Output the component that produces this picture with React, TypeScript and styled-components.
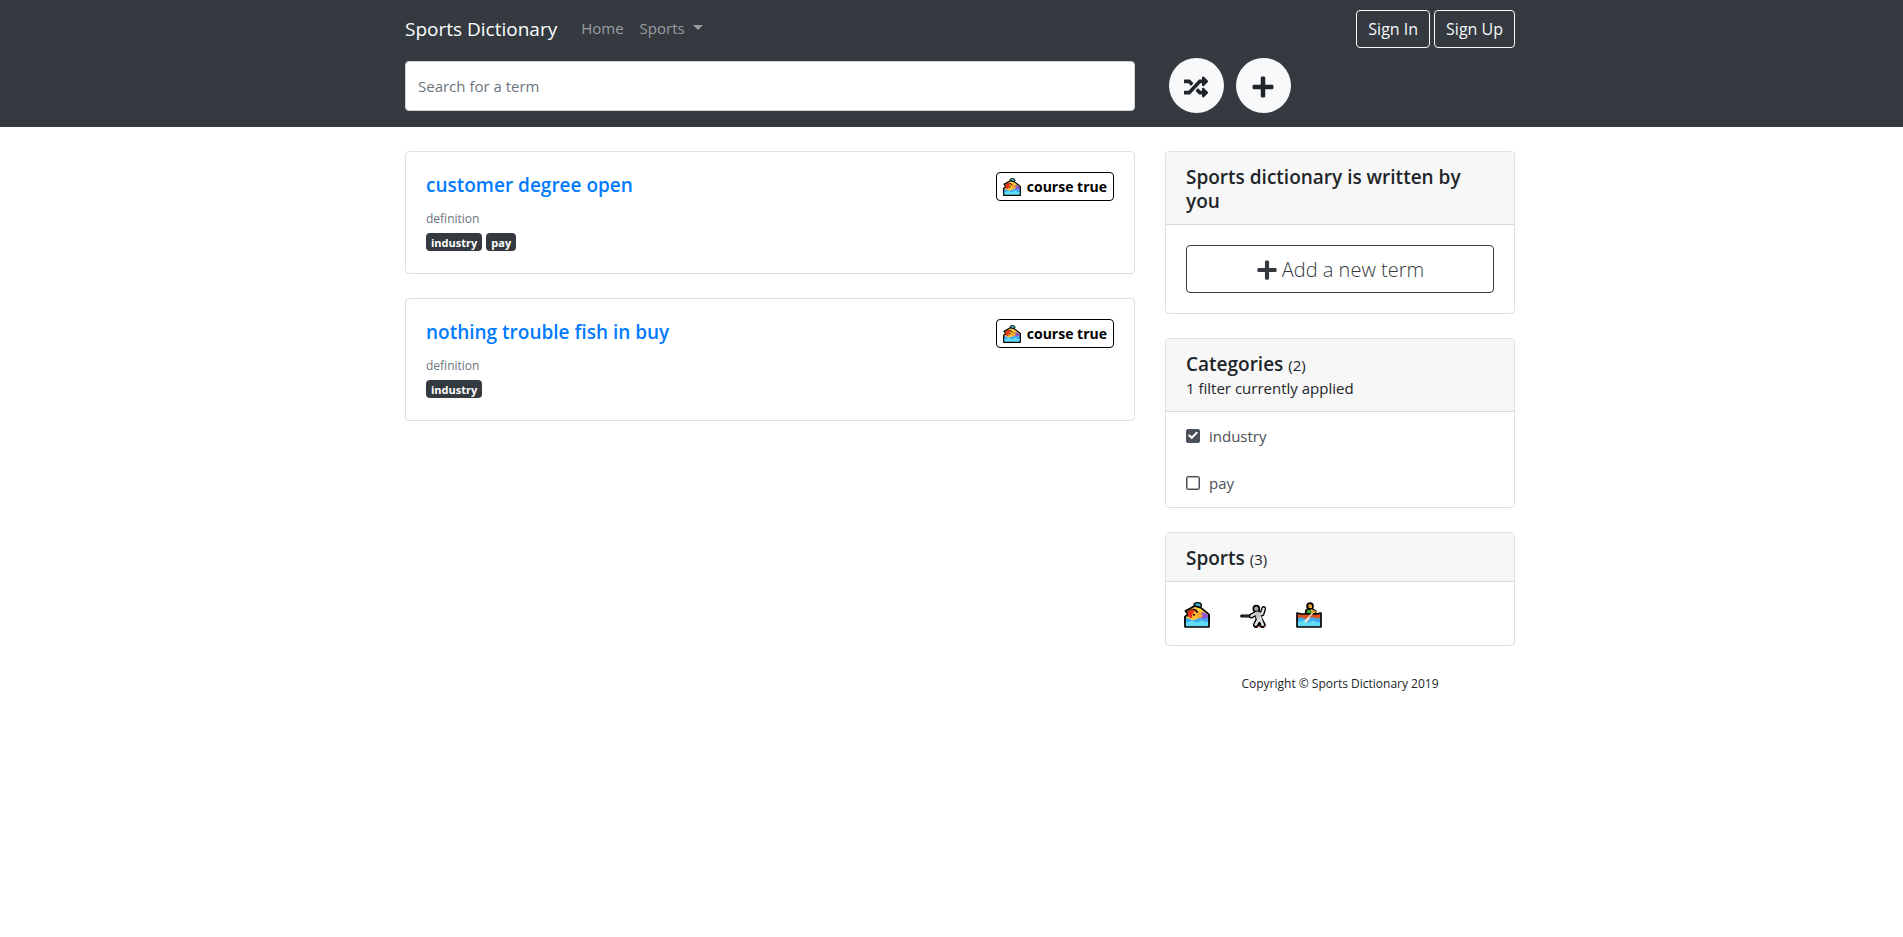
import React, { useState } from "react";
import styled, { createGlobalStyle, css } from "styled-components";
import { FaPlus, FaRandom } from "react-icons/fa";

const sans = `"Segoe UI", "Open Sans", "Noto Sans", sans-serif`;

const GlobalStyle = createGlobalStyle`
  *, *::before, *::after { box-sizing: border-box; }
  body {
    margin: 0;
    background: #fff;
    color: #212529;
    font-family: ${sans};
    font-size: 15px;
    line-height: 24px;
  }
  button, input { font-family: inherit; }
  h1, h2, p, ul { margin: 0; padding: 0; }
  a { text-decoration: none; }
`;

const Band = styled.div`
  padding-left: 17px;
`;

const HeaderBand = styled(Band).attrs({ as: "header" })`
  background: #343a40;
  padding-top: 10px;
  padding-bottom: 14px;
`;

const Container = styled.div`
  max-width: 1140px;
  margin: 0 auto;
  padding: 0 15px;
`;

const Columns = styled.div`
  display: grid;
  grid-template-columns: repeat(12, minmax(0, 1fr));
  column-gap: 30px;
`;

const MainColumn = styled.div`
  grid-column: span 8;
`;

const SideColumn = styled.div`
  grid-column: span 4;
`;

const NavRow = styled.nav`
  display: flex;
  align-items: center;
  height: 38px;
  margin-bottom: 10px;
`;

const Brand = styled.a`
  color: #fff;
  font-size: 19px;
  line-height: 30px;
  margin-right: 16px;
`;

const NavLink = styled.a`
  color: rgba(255, 255, 255, 0.5);
  padding: 7px 8px 9px;
`;

const Caret = styled.span`
  display: inline-block;
  margin-left: 8px;
  vertical-align: 4px;
  border-top: 5px solid;
  border-left: 5px solid transparent;
  border-right: 5px solid transparent;
`;

const AuthLinks = styled.div`
  display: flex;
  gap: 4px;
  margin-left: auto;
`;

const OutlineButton = styled.button<{ $wide?: boolean }>`
  display: flex;
  align-items: center;
  justify-content: center;
  background: transparent;
  border-radius: 4px;
  ${({ $wide }) =>
    $wide
      ? css`
          width: 100%;
          height: 48px;
          gap: 4px;
          padding: 2px 6px 0;
          border: 1px solid #343a40;
          color: #343a40;
          font-size: 20px;
          font-weight: 300;
          line-height: 30px;
        `
      : css`
          height: 38px;
          padding: 0 11px;
          border: 1px solid #f8f9fa;
          color: #f8f9fa;
          font-size: 16px;
          line-height: 24px;
        `}
`;

const SearchRow = styled(Columns)`
  align-items: center;
`;

const SearchInput = styled.input`
  display: block;
  width: 100%;
  height: 50px;
  padding: 0 12px;
  border: 1px solid #ced4da;
  border-radius: 4px;
  background: #fff;
  color: #495057;
  font-size: 15px;
  &::placeholder {
    color: #6c757d;
    opacity: 1;
  }
`;

const RoundActions = styled.div`
  display: flex;
  gap: 12px;
  padding-left: 4px;
`;

const RoundButton = styled.button`
  display: flex;
  align-items: center;
  justify-content: center;
  width: 55px;
  height: 55px;
  padding: 2px 1px 0 0;
  border: 0;
  border-radius: 50%;
  background: #f8f9fa;
  color: #212529;
  font-size: 24px;
`;

const Page = styled(Columns)`
  padding-top: 24px;
`;

const Stack = styled.div`
  display: flex;
  flex-direction: column;
  gap: 24px;
`;

const Card = styled.section`
  border: 1px solid rgba(0, 0, 0, 0.125);
  border-radius: 4px;
  overflow: hidden;
`;

const TermCard = styled(Card).attrs({ as: "article" })`
  display: flex;
  align-items: flex-start;
  justify-content: space-between;
  min-height: 123px;
  padding: 20px;
`;

const TermTitle = styled.h2`
  font-size: 19px;
  font-weight: 600;
  line-height: 26px;
  margin-bottom: 11px;
  a {
    color: #007bff;
  }
`;

const Definition = styled.p`
  color: #6c757d;
  font-size: 12px;
  line-height: 20px;
  margin-bottom: 4px;
`;

const Tags = styled.div`
  display: flex;
  gap: 4px;
`;

const Tag = styled.span`
  height: 18px;
  padding: 0 5px;
  border-radius: 4px;
  background: #343a40;
  color: #fff;
  font-size: 11px;
  font-weight: 700;
  line-height: 19px;
`;

const SportBadge = styled.a`
  display: flex;
  align-items: center;
  gap: 6px;
  height: 29px;
  padding: 0 6px;
  border: 1px solid #000;
  border-radius: 4px;
  color: #000;
  font-size: 14px;
  font-weight: 700;
  line-height: 20px;
`;

const CardHeader = styled.header`
  padding: 13px 20px 11px;
  background: #f7f7f7;
  border-bottom: 1px solid rgba(0, 0, 0, 0.125);
`;

const CardTitle = styled.h2`
  font-size: 19px;
  font-weight: 600;
  line-height: 24px;
`;

const Count = styled.small`
  font-size: 15px;
  font-weight: 400;
  line-height: 1;
`;

const CardBody = styled.div`
  padding: 20px;
`;

const CategoryItem = styled.label`
  display: flex;
  align-items: center;
  gap: 9px;
  height: 47px;
  padding: 0 20px;
  color: #495057;
`;

const CategoryList = styled.div`
  padding-bottom: 1px;
`;

const CheckBox = styled.input`
  appearance: none;
  display: grid;
  place-content: center;
  width: 14px;
  height: 14px;
  margin: 0;
  border: 1px solid #495057;
  border-radius: 2px;
  box-shadow: inset 0 0 0 1px rgba(73, 80, 87, 0.5);
  &:checked {
    background: #495057;
  }
  &:checked::after {
    content: "";
    width: 10px;
    height: 8px;
    background: #fff;
    clip-path: polygon(0 52%, 14% 34%, 38% 60%, 86% 0, 100% 16%, 38% 96%);
  }
`;

const SportList = styled.ul`
  display: flex;
  gap: 30px;
  height: 63px;
  padding: 20px 18px;
  list-style: none;
  a {
    display: block;
  }
  svg {
    display: block;
  }
`;

const Footer = styled.footer`
  padding: 24px 0;
  font-size: 12px;
  line-height: 28px;
  text-align: center;
`;

type IconProps = { size: number };

function SwimmerIcon({ size }: IconProps) {
  return (
    <svg width={size} height={size} viewBox="0 0 78 78" aria-hidden="true">
      <ellipse cx="41" cy="10" rx="11" ry="8" fill="#3fb5c9" stroke="#000" strokeWidth="4" />
      <path d="M4 27 L32 12 L50 17 L75 37 V62 H3 V44 L12 36 Z" fill="#ffc83d" stroke="#000" strokeWidth="5" strokeLinejoin="round" />
      <path d="M44 36 L58 30 L73 39 V58 H42 Z" fill="#8b5ad2" />
      <path d="M36 26 L50 30 L56 42 L48 50 L40 46 Z" fill="#f6a42c" />
      <path d="M3 50 Q11 46 19 52 T37 52 T55 50 T75 46 V75 H3 Z" fill="#61dcf7" />
      <path d="M3 50 Q11 46 19 52 T37 52 T55 50 T75 46 V56 Q67 64 59 58 Q51 52 43 60 Q35 64 29 57 Q21 54 15 60 Q9 62 3 56 Z" fill="#3fa8f2" />
      <circle cx="26" cy="36" r="13" fill="#ffb52e" />
      <path d="M12 44 A14 14 0 0 1 24 23 Q36 20 40 32" fill="none" stroke="#000" strokeWidth="4" />
      <path d="M14 44 A12 12 0 0 1 34 27 Q23 32 24 48 Q18 49 14 44 Z" fill="#e9341c" />
      <circle cx="30" cy="38" r="3" fill="#000" />
      <path d="M3 44 V75 H75 V38" fill="none" stroke="#000" strokeWidth="5" strokeLinejoin="round" />
    </svg>
  );
}

function FencerIcon({ size }: IconProps) {
  return (
    <svg width={size} height={size} viewBox="0 0 78 78" aria-hidden="true">
      <g fill="none" stroke="#000" strokeLinecap="round" strokeLinejoin="round">
        <path d="M5 42 H34" strokeWidth="9" />
        <path d="M34 42 L48 34 L66 36 L71 20" strokeWidth="15" />
        <path d="M52 36 L56 52 L48 69 M58 50 L68 69" strokeWidth="18" />
        <circle cx="49" cy="20" r="9" strokeWidth="5" fill="#a9a9a9" />
      </g>
      <g fill="none" stroke="#e2e2e2" strokeLinecap="round" strokeLinejoin="round">
        <path d="M34 42 L48 34 L66 36 L71 20" strokeWidth="7" />
        <path d="M53 36 L58 52" strokeWidth="15" stroke="#c4c4c4" />
        <path d="M56 52 L47 68 M61 50 L68 68" strokeWidth="8" />
        <path d="M8 42 H26" strokeWidth="2" stroke="#777" />
      </g>
      <path d="M58 68 L60 62" stroke="#000" strokeWidth="5" />
      <path d="M52 74 H60 M71 74 H76" stroke="#c44a45" strokeWidth="4" />
    </svg>
  );
}

function RowerIcon({ size }: IconProps) {
  return (
    <svg width={size} height={size} viewBox="0 0 78 78" aria-hidden="true">
      <path d="M28 36 L31 23 L46 18 L60 28 L56 38 Z" fill="#43a82a" stroke="#000" strokeWidth="5" strokeLinejoin="round" />
      <circle cx="42" cy="12" r="9" fill="#a86a24" stroke="#000" strokeWidth="5" />
      <path d="M41 8 Q49 9 48 18 L39 18 Z" fill="#f5ad3c" />
      <path d="M45 24 L57 29 L48 35" fill="none" stroke="#f5ad3c" strokeWidth="5" />
      <path d="M3 33 L16 36 H62 L75 33 V46 L72 60 H6 L3 46 Z" fill="#d9531e" stroke="#000" strokeWidth="5" strokeLinejoin="round" />
      <path d="M3 52 Q12 44 20 48 Q30 54 40 48 Q50 44 58 49 Q66 52 75 48 V75 H3 Z" fill="#61dcf7" />
      <path d="M3 52 Q12 44 20 48 Q30 54 40 48 Q50 44 58 49 Q66 52 75 48 V58 Q67 64 59 58 Q50 52 43 59 Q35 64 28 58 Q20 53 13 58 Q8 60 3 58 Z" fill="#3fa8f2" />
      <path d="M3 49 V75 H75 V49" fill="none" stroke="#000" strokeWidth="5" strokeLinejoin="round" />
      <path d="M50 32 L34 52" stroke="#f7c9ac" strokeWidth="5" />
      <path d="M37 46 L26 57 L29 61 L40 51 Z" fill="#ffe3d6" stroke="#ffe3d6" strokeWidth="3" strokeLinejoin="round" />
    </svg>
  );
}

const terms = [
  { title: "customer degree open", tags: ["industry", "pay"] },
  { title: "nothing trouble fish in buy", tags: ["industry"] },
];

const sports = [
  { name: "course true", Icon: SwimmerIcon },
  { name: "fencing", Icon: FencerIcon },
  { name: "rowing", Icon: RowerIcon },
];

export default function App() {
  const [selected, setSelected] = useState<string[]>(["industry"]);
  const toggle = (name: string) =>
    setSelected((list) =>
      list.includes(name) ? list.filter((n) => n !== name) : [...list, name]
    );

  return (
    <>
      <GlobalStyle />
      <HeaderBand>
        <Container>
          <NavRow>
            <Brand href="#">Sports Dictionary</Brand>
            <NavLink href="#">Home</NavLink>
            <NavLink href="#">
              Sports
              <Caret />
            </NavLink>
            <AuthLinks>
              <OutlineButton type="button">Sign In</OutlineButton>
              <OutlineButton type="button">Sign Up</OutlineButton>
            </AuthLinks>
          </NavRow>
          <SearchRow>
            <MainColumn>
              <SearchInput type="search" aria-label="Search for a term" placeholder="Search for a term" />
            </MainColumn>
            <SideColumn>
              <RoundActions>
                <RoundButton type="button" aria-label="Random term">
                  <FaRandom />
                </RoundButton>
                <RoundButton type="button" aria-label="Add a term">
                  <FaPlus />
                </RoundButton>
              </RoundActions>
            </SideColumn>
          </SearchRow>
        </Container>
      </HeaderBand>

      <Band>
        <Container>
          <Page>
            <MainColumn>
              <Stack>
                {terms.map((term) => (
                  <TermCard key={term.title}>
                    <div>
                      <TermTitle>
                        <a href="#">{term.title}</a>
                      </TermTitle>
                      <Definition>definition</Definition>
                      <Tags>
                        {term.tags.map((tag) => (
                          <Tag key={tag}>{tag}</Tag>
                        ))}
                      </Tags>
                    </div>
                    <SportBadge href="#">
                      <SwimmerIcon size={18} />
                      course true
                    </SportBadge>
                  </TermCard>
                ))}
              </Stack>
            </MainColumn>

            <SideColumn>
              <Stack>
                <Card>
                  <CardHeader>
                    <CardTitle>Sports dictionary is written by you</CardTitle>
                  </CardHeader>
                  <CardBody>
                    <OutlineButton type="button" $wide>
                      <FaPlus size={22} />
                      Add a new term
                    </OutlineButton>
                  </CardBody>
                </Card>

                <Card>
                  <CardHeader>
                    <CardTitle>
                      Categories <Count>(2)</Count>
                    </CardTitle>
                    <p>{selected.length} filter currently applied</p>
                  </CardHeader>
                  <CategoryList>
                    {["industry", "pay"].map((name) => (
                      <CategoryItem key={name}>
                        <CheckBox
                          type="checkbox"
                          checked={selected.includes(name)}
                          onChange={() => toggle(name)}
                        />
                        {name}
                      </CategoryItem>
                    ))}
                  </CategoryList>
                </Card>

                <Card>
                  <CardHeader>
                    <CardTitle>
                      Sports <Count>(3)</Count>
                    </CardTitle>
                  </CardHeader>
                  <SportList>
                    {sports.map(({ name, Icon }) => (
                      <li key={name}>
                        <a href="#" aria-label={name}>
                          <Icon size={26} />
                        </a>
                      </li>
                    ))}
                  </SportList>
                </Card>
              </Stack>
              <Footer>Copyright © Sports Dictionary 2019</Footer>
            </SideColumn>
          </Page>
        </Container>
      </Band>
    </>
  );
}
